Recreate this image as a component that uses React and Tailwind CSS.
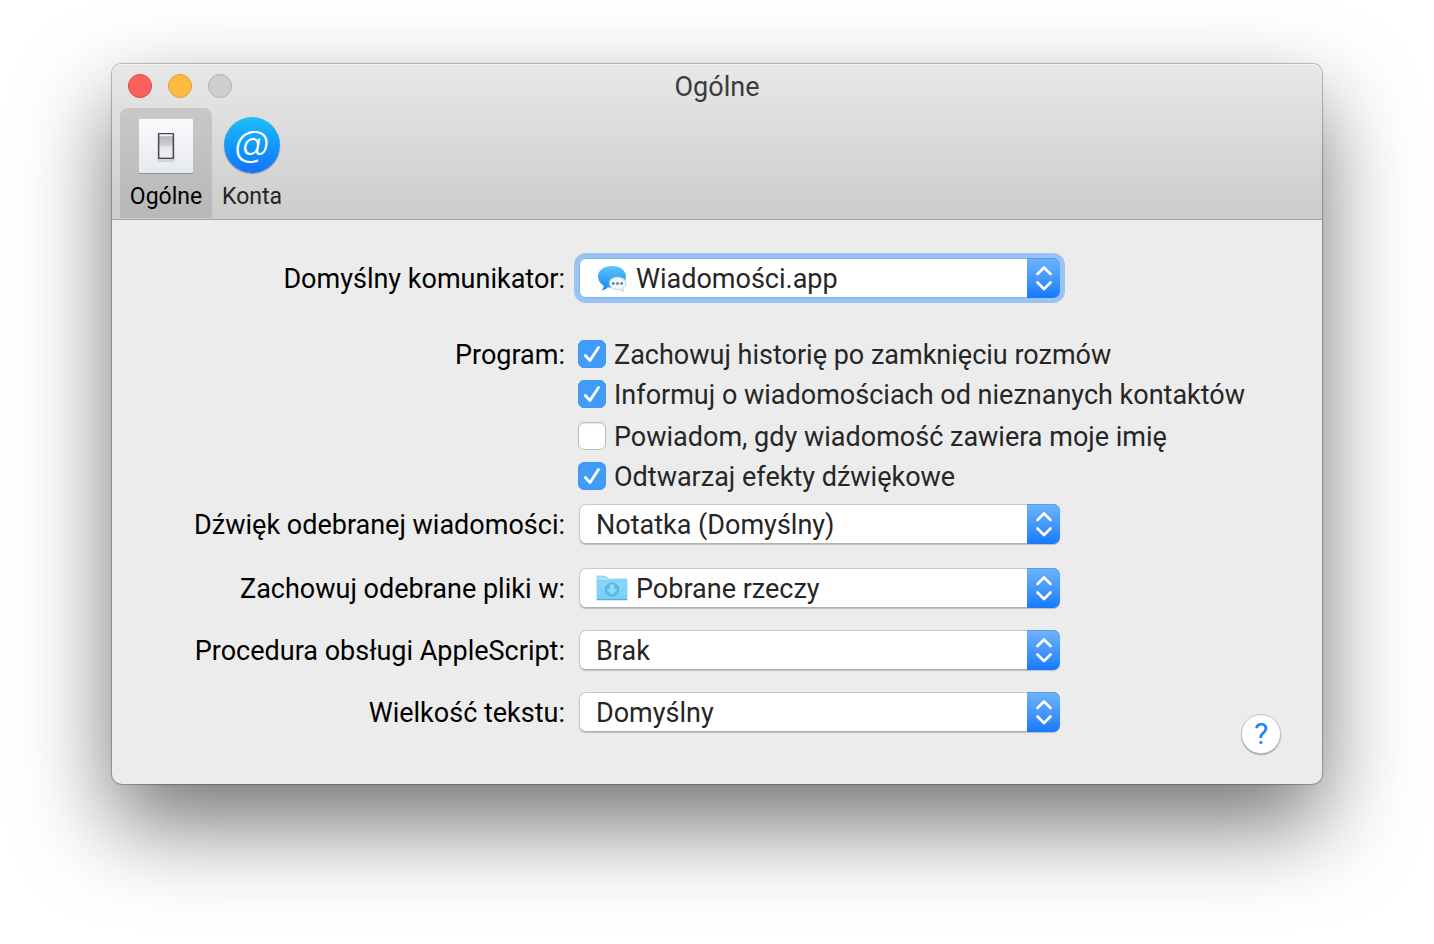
import { useState } from 'react';

const tabs = [
  { id: 'general', label: 'Ogólne', width: 'w-[92px]', icon: <SwitchIcon /> },
  { id: 'accounts', label: 'Konta', width: 'w-20', icon: <AccountsIcon /> },
];

const programOptions = [
  { id: 'history', label: 'Zachowuj historię po zamknięciu rozmów', checked: true },
  { id: 'unknown', label: 'Informuj o wiadomościach od nieznanych kontaktów', checked: true },
  { id: 'mention', label: 'Powiadom, gdy wiadomość zawiera moje imię', checked: false, spacing: 'mt-0.5' },
  { id: 'sounds', label: 'Odtwarzaj efekty dźwiękowe', checked: true },
];

function SwitchIcon() {
  return (
    <svg viewBox="0 0 58 58" className="size-[58px]" aria-hidden="true">
      <defs>
        <linearGradient id="plate" x1="0" y1="0" x2="0" y2="1">
          <stop offset="0" stopColor="#fbfbfc" />
          <stop offset="1" stopColor="#e6e9ee" />
        </linearGradient>
        <linearGradient id="rocker" x1="0" y1="0" x2="0" y2="1">
          <stop offset="0" stopColor="#b0b1b6" />
          <stop offset="0.48" stopColor="#cfd0d4" />
          <stop offset="0.5" stopColor="#e3e5e9" />
          <stop offset="1" stopColor="#eef0f3" />
        </linearGradient>
      </defs>
      <rect x="2" y="3" width="54" height="54" rx="1" fill="#8f9194" />
      <rect x="2" y="2" width="54" height="54" rx="1" fill="url(#plate)" />
      <rect x="20" y="16" width="18" height="29" rx="2" fill="#9a9ca0" opacity="0.3" />
      <rect x="21.700" y="16.700" width="14.600" height="24.600" fill="url(#rocker)" stroke="#494a4d" strokeWidth="1.400" />
      <path d="M22.500 18.300h13" stroke="#f4f4f6" strokeWidth="1.800" />
    </svg>
  );
}

function AccountsIcon() {
  return (
    <span
      aria-hidden="true"
      className="flex size-14 items-center justify-center rounded-full bg-linear-to-b from-[#24bdf8] to-[#1672fb] pb-1 font-[Inter,sans-serif] text-[36px] leading-none font-light text-white italic shadow-[0_1px_1px_rgba(0,0,0,0.35)]"
    >
      @
    </span>
  );
}

function MessagesIcon() {
  return (
    <svg viewBox="0 0 32 32" className="size-8" aria-hidden="true">
      <defs>
        <linearGradient id="bubble" x1="0" y1="0" x2="0" y2="1">
          <stop offset="0" stopColor="#5ac5fa" />
          <stop offset="1" stopColor="#1a86f7" />
        </linearGradient>
      </defs>
      <path
        d="M16 4C8 4 2 8.600 2 14.500c0 4 2.400 7.200 5.800 9.200-.1 1.700-1 3.300-2.200 4.500 2.500 0 4.700-1.200 6.300-2.900 1.300.2 2.700.4 4.100.4 8 0 14-5 14-11.200S24 4 16 4z"
        fill="url(#bubble)"
      />
      <path
        d="M21.500 15c-4.800 0-8.300 2.700-8.300 6.300s3.500 6.400 8.300 6.400c.8 0 1.500-.1 2.200-.2 1.100 1.100 2.500 1.800 4 1.800-.7-.8-1.200-1.800-1.200-2.800 2.100-1.200 3.400-3 3.400-5.200 0-3.600-3.600-6.300-8.400-6.300z"
        fill="#f1f4f7"
        stroke="#a9bdd0"
        strokeWidth="0.7"
      />
      <circle cx="17.300" cy="21.500" r="1.300" fill="#2d6fb4" />
      <circle cx="21.500" cy="21.500" r="1.300" fill="#2d6fb4" />
      <circle cx="25.700" cy="21.500" r="1.300" fill="#2d6fb4" />
    </svg>
  );
}

function DownloadsIcon() {
  return (
    <svg viewBox="0 0 32 32" className="size-8" aria-hidden="true">
      <defs>
        <linearGradient id="folder" x1="0" y1="0" x2="0" y2="1">
          <stop offset="0" stopColor="#8bdafa" />
          <stop offset="1" stopColor="#72cef3" />
        </linearGradient>
      </defs>
      <path d="M1 28V5q0-1 1-1h7l4 3h17q1 0 1 1v20z" fill="#a2e1fb" stroke="#6fbfe0" strokeWidth="0.6" />
      <path d="M1 9h30v18q0 1-1 1H2q-1 0-1-1z" fill="url(#folder)" />
      <path d="M1 9h30" stroke="#6cc3e8" strokeWidth="0.8" />
      <path d="M1 27.500h30" stroke="#58abcf" strokeWidth="1" />
      <circle cx="16" cy="17.500" r="6.600" fill="#62bde4" stroke="#4ca9d2" strokeWidth="0.900" />
      <path d="M14 12.500h4v4.700h3.300L16 22.500l-5.300-5.300H14z" fill="#8fdcfa" />
    </svg>
  );
}

function PopUp({ id, label, value, icon, focused, spacing }) {
  return (
    <div className={`grid grid-cols-[453px_481px] items-center gap-x-3.5 ${spacing || ''}`}>
      <label htmlFor={id} className="pt-0.5 text-right whitespace-nowrap text-black">
        {label}
      </label>
      <div
        className={`relative h-10 rounded-[7px] ${
          focused ? 'shadow-[0_0_0_5px_#99c3f1]' : 'shadow-[0_1px_1px_rgba(0,0,0,0.2)]'
        }`}
      >
        <select
          id={id}
          className={`block h-10 w-full appearance-none rounded-[7px] border bg-white pt-0.5 pr-10 outline-none ${
            focused ? 'border-[#84b3e6]' : 'border-[#c8c8c8] border-b-[#b0b0b0]'
          } ${icon ? 'pl-14' : 'pl-4'}`}
        >
          <option>{value}</option>
        </select>
        {icon && <span className="pointer-events-none absolute top-1 left-[17px]">{icon}</span>}
        <span className="pointer-events-none absolute inset-y-0 right-0 flex w-[33px] items-center justify-center rounded-r-[7px] bg-linear-to-b from-[#6eb4fa] to-[#1479fc] shadow-[inset_0_1px_0_rgba(60,140,235,0.6)]">
          <svg
            viewBox="0 0 16 26"
            className="h-[26px] w-4"
            fill="none"
            stroke="#fff"
            strokeWidth="2.6"
            strokeLinecap="round"
            strokeLinejoin="round"
            aria-hidden="true"
          >
            <path d="M1.500 9l6.500-6.500L14.500 9M1.500 17.500L8 24l6.500-6.500" />
          </svg>
        </span>
      </div>
    </div>
  );
}

function CheckOption({ id, label, checked, spacing }) {
  const [on, setOn] = useState(checked);

  return (
    <div className={`flex h-10 items-center gap-2 ${spacing || ''}`}>
      <span className="relative size-7 shrink-0">
        <input
          id={id}
          type="checkbox"
          checked={on}
          onChange={() => setOn(!on)}
          className="block size-7 appearance-none rounded-md border border-[#b9b9b9] bg-white shadow-[inset_0_1px_1px_rgba(0,0,0,0.1)] checked:border-[#3d96f5] checked:bg-[#419bf9] checked:shadow-none"
        />
        {on && (
          <svg
            viewBox="0 0 28 28"
            className="pointer-events-none absolute inset-0 size-7"
            fill="none"
            stroke="#fff"
            strokeWidth="2.800"
            strokeLinecap="round"
            strokeLinejoin="round"
            aria-hidden="true"
          >
            <path d="M7.300 15.500l4.700 5L20.500 7.500" />
          </svg>
        )}
      </span>
      <label htmlFor={id} className="pt-0.5 whitespace-nowrap">
        {label}
      </label>
    </div>
  );
}

export default function App() {
  const [active, setActive] = useState('general');

  return (
    <div className="min-h-[944px] bg-white px-28 pt-16 pb-40 font-[Roboto,'Noto_Sans',sans-serif] text-[27px] leading-8 text-[#262626]">
      <main className="rounded-[10px] bg-[#ececec] shadow-[0_0_1px_1px_rgba(0,0,0,0.25),0_40px_90px_rgba(0,0,0,0.55)]">
        <header className="rounded-t-[10px] border-b border-[#a5a5a5] bg-linear-to-b from-[#e8e8e8] to-[#cccccc] pb-px shadow-[inset_0_1px_0_#f5f5f5]">
          <div className="grid h-11 grid-cols-[1fr_auto_1fr] items-center px-4">
            <div className="flex gap-4">
              <button type="button" aria-label="Zamknij" className="size-6 rounded-full border border-[#e0443f] bg-[#fc615d]" />
              <button type="button" aria-label="Minimalizuj" className="size-6 rounded-full border border-[#de9f34] bg-[#fdbc40]" />
              <button type="button" aria-label="Powiększ" disabled className="size-6 rounded-full border border-[#b0b0b0] bg-[#cfcfcf]" />
            </div>
            <h1 className="pt-0.5 text-[#3c3c3c]">Ogólne</h1>
          </div>

          <nav className="flex px-2">
            {tabs.map((tab) => (
              <button
                key={tab.id}
                type="button"
                onClick={() => setActive(tab.id)}
                className={`flex h-[110px] flex-col items-center gap-2 rounded-t-lg pt-[9px] text-[23px] leading-7 ${tab.width} ${
                  active === tab.id ? 'bg-linear-to-b from-[#c8c8c8] to-[#b8b8b8] text-black' : ''
                }`}
              >
                <span className="flex h-[58px] items-start">{tab.icon}</span>
                {tab.label}
              </button>
            ))}
          </nav>
        </header>

        <div className="flex items-end pt-[38px] pr-[41px] pb-[30px]">
          <form className="min-w-0 flex-1 pb-[22px]">
            <PopUp id="messenger" label="Domyślny komunikator:" value="Wiadomości.app" icon={<MessagesIcon />} focused />

            <div
              role="group"
              aria-labelledby="program"
              className="mt-9 grid grid-cols-[453px_1fr] gap-x-[13px]"
            >
              <span id="program" className="flex h-10 items-center justify-end pt-0.5 text-black">
                Program:
              </span>
              <div>
                {programOptions.map((option) => (
                  <CheckOption key={option.id} {...option} />
                ))}
              </div>
            </div>

            <PopUp id="sound" label="Dźwięk odebranej wiadomości:" value="Notatka (Domyślny)" spacing="mt-2" />
            <PopUp id="folder-select" label="Zachowuj odebrane pliki w:" value="Pobrane rzeczy" icon={<DownloadsIcon />} spacing="mt-6" />
            <PopUp id="script" label="Procedura obsługi AppleScript:" value="Brak" spacing="mt-[22px]" />
            <PopUp id="size" label="Wielkość tekstu:" value="Domyślny" spacing="mt-[22px]" />
          </form>

          <button
            type="button"
            aria-label="Pomoc"
            className="flex size-10 shrink-0 items-center justify-center rounded-full border border-[#c4c4c4] bg-white text-[30px] text-[#1a82fb] shadow-[0_1px_1px_rgba(0,0,0,0.3)]"
          >
            ?
          </button>
        </div>
      </main>
    </div>
  );
}
